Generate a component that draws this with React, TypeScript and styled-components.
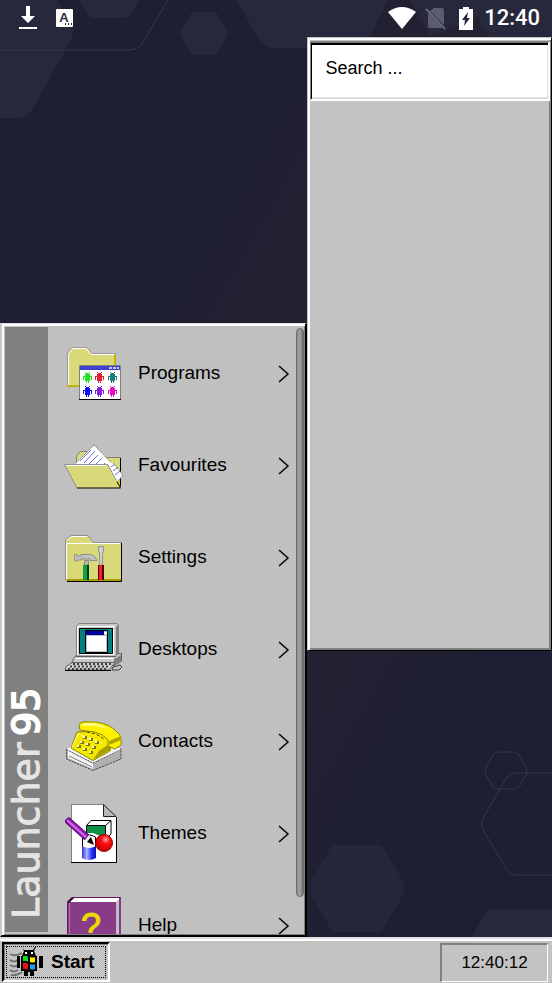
import React from "react";
import styled, { createGlobalStyle } from "styled-components";

const GlobalStyle = createGlobalStyle`
  * { box-sizing: border-box; }
  body { margin: 0; background: #1e1f33; }
  button, input { font: inherit; color: inherit; }
`;

const uiFont = `"Liberation Sans", Arial, sans-serif`;

const Screen = styled.div`
  position: relative;
  display: flex;
  flex-direction: column;
  height: 100vh;
  min-height: 480px;
  overflow: hidden;
  font-family: ${uiFont};
  font-size: 18px;
  color: #000;
`;

const WallpaperArt = styled.svg`
  position: absolute;
  inset: 0;
  width: 100%;
  height: 100%;
`;

const StatusBar = styled.header`
  position: relative;
  display: flex;
  align-items: center;
  justify-content: space-between;
  height: 37px;
  padding: 0 12px 1px 16px;
  color: #fff;
`;

const StatusGroup = styled.div<{ $gap: number }>`
  display: flex;
  align-items: center;
  gap: ${(p) => p.$gap}px;
`;

const StatusTime = styled.time`
  margin-left: 1px;
  font-family: Roboto, sans-serif;
  font-size: 22px;
  font-weight: 500;
  line-height: 36px;
`;

const Desktop = styled.main`
  position: relative;
  display: flex;
  flex: 1;
  min-height: 0;
`;

const StartMenu = styled.nav`
  display: flex;
  flex: 5 1 0;
  min-width: 0;
  margin-top: 286px;
  background: #c0c0c0;
  border: solid;
  border-width: 1px 2px 2px 2px;
  border-color: #dfdfdf #000 #000 #c8c8c8;
  box-shadow: inset 2px 2px 0 #fff, inset -1px -1px 0 #808080;
  padding: 3px 1px 2px 3px;
`;

const Banner = styled.div`
  flex: none;
  display: flex;
  align-items: center;
  width: 43px;
  margin-bottom: 1px;
  padding-top: 13px;
  background: #808080;
  color: #e4e4e4;
  font-family: "DejaVu Sans", Verdana, sans-serif;
  font-size: 38px;
  line-height: 45px;
  writing-mode: vertical-rl;
  transform: rotate(180deg);
  -webkit-text-stroke: 1px #e4e4e4;
`;

const BannerNumber = styled.b`
  margin-top: 6px;
  color: #fff;
  font-weight: normal;
  -webkit-text-stroke: 2px #fff;
`;

const MenuList = styled.ul`
  flex: 1;
  min-width: 0;
  margin: 0 0 -1px;
  padding: 0;
  list-style: none;
  overflow-y: auto;
  scrollbar-width: none;
`;

const MenuButton = styled.button`
  display: flex;
  align-items: center;
  width: 100%;
  height: 92px;
  padding: 0 6px 0 14px;
  border: 0;
  background: none;
  font-size: 19px;
  text-align: left;
`;

const MenuLabel = styled.span`
  flex: 1;
  padding-left: 12px;
`;

const ScrollTrack = styled.div`
  flex: none;
  width: 8px;
  padding-top: 1px;
`;

const ScrollThumb = styled.div`
  height: 94%;
  border: 1px solid #6c6c6c;
  border-radius: 4px;
  background: linear-gradient(90deg, #8a8a8a, #a4a4a4 50%, #6a6a6a);
`;

const SearchPanel = styled.section`
  flex: 4 1 0;
  min-width: 0;
  margin-bottom: 286px;
  padding: 3px 1px 2px 2px;
  background: #c3c3c3;
  border: 1px solid;
  border-color: #c3c3c3 #000 #000 #c3c3c3;
  box-shadow: inset 2px 2px 0 #fff, inset -2px -2px 0 #808080;
`;

const SearchInput = styled.input`
  display: block;
  width: 100%;
  height: 60px;
  padding: 0 14px 6px;
  border: solid;
  border-width: 2px 2px 2px 1px;
  border-color: #808080 #fff #fff #808080;
  border-radius: 0;
  background: #fff;
  box-shadow: inset 1px 2px 0 #000, inset -1px -2px 0 #dfdfdf;
  outline: 0;
  &::placeholder { color: #000; opacity: 1; }
`;

const Taskbar = styled.footer`
  position: relative;
  display: flex;
  align-items: stretch;
  justify-content: space-between;
  height: 46px;
  padding: 1px 4px 1px 2px;
  background: #c3c3c3;
  border-top: 2px solid #dfdfdf;
  box-shadow: inset 0 2px 0 #fff;
`;

const StartButton = styled.button`
  display: flex;
  margin-top: 2px;
  padding: 2px;
  border: solid;
  border-width: 2px;
  border-color: #000 #fff #fff #000;
  box-shadow: inset 1px 1px 0 #808080;
  background: repeating-conic-gradient(#bababa 0 25%, #cecece 0 50%) 0 0 / 2px 2px;
  font-size: 19px;
  font-weight: bold;
`;

const StartFocus = styled.span`
  display: flex;
  align-items: center;
  gap: 8px;
  padding: 0 11px 0 2px;
  border: 1px dotted #000;
`;

const Clock = styled.time`
  display: flex;
  align-items: center;
  justify-content: center;
  width: 108px;
  margin-top: 3px;
  border: solid;
  border-width: 2px 1px 1px 2px;
  border-color: #808080 #fff #fff #808080;
  font-size: 17px;
`;

const Wallpaper = () => (
  <WallpaperArt viewBox="0 0 552 983" preserveAspectRatio="xMidYMid slice" aria-hidden="true">
    <defs>
      <linearGradient id="sky" x1="0" y1="0" x2="1" y2="1">
        <stop offset="0" stopColor="#1e1f33" />
        <stop offset="0.25" stopColor="#1e1f33" />
        <stop offset="0.4" stopColor="#232132" />
        <stop offset="0.62" stopColor="#242132" />
        <stop offset="0.78" stopColor="#1e1f33" />
        <stop offset="1" stopColor="#1e1f33" />
      </linearGradient>
    </defs>
    <path fill="url(#sky)" d="M0 0H552V983H0Z" />
    <g fill="#27283c">
      <path d="M0 0H57L73 28Q74 33 72 38L32 110Q27 118 20 118H0Z" />
      <path d="M78 0L88 15Q90 18 94 18H124Q128 18 130 15L139 0Z" />
      <path d="M195 12H213Q216 12 218 15L227 30Q228 33 227 36L218 52Q216 55 213 55H195Q192 55 190 52L181 36Q180 33 181 30L190 15Q192 12 195 12Z" />
      <path d="M236 0L257 36Q264 48 276 48H355Q364 48 369 38L388 0Z" />
      <path d="M410 0H552V60H500L481 24Q479 20 481 16L430 37Z" />
      <path fill="#25263a" d="M336 845H378Q382 845 384 849L404 883Q406 888 404 893L384 928Q382 932 378 932H336Q332 932 330 928L310 893Q308 888 310 883L330 849Q332 845 336 845Z" />
      <path d="M471 938L483 917Q487 909 496 909H552V938Z" />
    </g>
    <g fill="none" stroke="#37374c">
      <path d="M0 50H130Q138 50 143 42L168 0" />
      <path d="M498 752H514Q517 752 519 755L526 767Q528 771 526 775L519 787Q517 789 514 789H498Q495 789 493 787L486 775Q484 771 486 767L493 755Q495 752 498 752Z" />
      <path d="M552 773H515Q510 773 507 777L483 818Q480 824 483 830L507 870Q510 875 515 875H552" />
    </g>
  </WallpaperArt>
);

const DownloadIcon = () => (
  <svg width="24" height="26" viewBox="0 0 24 26" fill="#fff" aria-hidden="true">
    <path d="M10 1h4v10h5l-7 7-7-7h5zM3 22h18v2H3z" />
  </svg>
);

const KeyboardIcon = () => (
  <svg width="18" height="20" viewBox="0 0 18 20" aria-hidden="true">
    <rect x="0" y="1" width="17" height="18" rx="1" fill="#fff" />
    <text x="8" y="14" textAnchor="middle" fontFamily="Liberation Sans, sans-serif" fontWeight="bold" fontSize="13" fill="#27283c">A</text>
    <path fill="#27283c" d="M9 15h1v2H9zM12 15h1v2h-1zM15 15h1v2h-1z" />
  </svg>
);

const WifiIcon = () => (
  <svg width="28" height="24" viewBox="0 0 28 24" fill="#fff" aria-hidden="true">
    <path d="M14 23L0 6Q14-4 28 6Z" />
  </svg>
);

const NoSimIcon = () => (
  <svg width="22" height="24" viewBox="0 0 22 24" aria-hidden="true">
    <path fill="#5c5c6e" d="M9 2h8q2 0 2 2v15L5 5zM3 7l15 15H5q-2 0-2-2z" />
    <path stroke="#68687a" strokeWidth="2" d="M1 3l19 20" />
  </svg>
);

const BatteryIcon = () => (
  <svg width="18" height="24" viewBox="-2 0 18 24" aria-hidden="true">
    <path fill="#fff" d="M5 1h6v2h4v21H1V3h4z" />
    <path fill="#27283c" d="M10 6L4 14h3l-1 6 6-8H9z" />
  </svg>
);

const Android = ({ x, y, color }: { x: number; y: number; color: string }) => (
  <path
    transform={`translate(${x} ${y})`}
    fill={color}
    d="M2 0h1v1h3V0h1v1H6v1h1v2h2v4H8V5H7v4H6v2H5V9H4v2H3V9H2V5H1v3H0V4h2V2h1V1H2z"
  />
);

const ProgramsArt = () => (
  <>
    <path fill="#d9d97a" stroke="#9a9a9a" d="M5.500 45V12L10 6.500H25L30 12.500H53.500V46" />
    <path fill="none" stroke="#fff" d="M6.500 45V13L11 7.500H24L29 13.500H52" />
    <path fill="none" stroke="#c0b400" strokeWidth="2" d="M53 14V45H5" />
    <path fill="#fff" stroke="#808080" d="M17.500 24.500H58.500V58.500H17.500Z" />
    <path fill="#4040d0" d="M18 25h40v4H18z" />
    <path fill="#c8c8e0" d="M47 26h3v2h-3zM51 26h3v2h-3zM55 26h2v2h-2z" />
    <path stroke="#000" d="M17 58.500h42" />
    <Android x={21} y={31} color="#20e020" />
    <Android x={33} y={31} color="#e02030" />
    <Android x={46} y={31} color="#207878" />
    <Android x={21} y={45} color="#1010f0" />
    <Android x={33} y={45} color="#8020e0" />
    <Android x={46} y={45} color="#e010c0" />
  </>
);

const FavouritesArt = () => (
  <>
    <path fill="#d9d97a" stroke="#808080" d="M14.500 54V23L18 18.500H25L29 24.500H58.500V54Z" />
    <path fill="#e8d800" d="M53 44l5-4v14h-3z" />
    <path fill="none" stroke="#000" d="M58.500 25V55" />
    <path fill="#fff" stroke="#808080" strokeDasharray="2 1" d="M32 12L13 31L50 56L56 48L61 42Z" />
    <path stroke="#7070d8" d="M29 17L18 28M33 18L22 30M36 22L27 31M40 25L34 31M43 30L39 34" />
    <path fill="#d9d97a" stroke="#909090" d="M2.500 31.500H46L59 55H15Z" />
    <path fill="#fff" d="M45 29l6 1 10 12-6 7z" />
    <path stroke="#7070d8" d="M49 34l4-3M51 38l5-4M53 42l5-4" />
    <path fill="none" stroke="#808080" strokeDasharray="2 1" d="M46 32l9 17 6-7-10-12" />
    <path fill="none" stroke="#fff" d="M4 32.500H45" />
    <path fill="none" stroke="#202000" d="M55 49L58.500 55H15" />
  </>
);

const SettingsArt = () => (
  <>
    <path fill="#d9d97a" stroke="#909090" d="M3.500 55V15L9 10.500H26L31 17.500H59.500V55Z" />
    <path fill="none" stroke="#fff" d="M4.500 54V18.500H58M5 15L10 11.500H25" />
    <path stroke="#a89c00" strokeWidth="2" d="M5 55H59" />
    <path fill="none" stroke="#000" d="M59.500 18V56.500H5" />
    <path fill="#c0c0c0" stroke="#909090" d="M12.500 29.500H15V31H19V29.500H29Q33 30 35 35.500H28V34H19V35H15V36H12.500Z" />
    <path fill="#b8b8b8" stroke="#888" d="M22.500 35.500h4V40h-4z" />
    <path fill="#10a040" d="M21 40h4v15h-4z" />
    <path fill="#003818" d="M25 40h2v15h-2z" />
    <path fill="#d0d0d0" stroke="#909090" d="M36.500 21.500h5v5l-1 2V40h-3V28l-1-2z" />
    <path fill="#f02030" d="M37 40h3v15h-3z" />
    <path fill="#500" d="M36 40h1v15h-1zM40 40h2v15h-2z" />
  </>
);

const DesktopsArt = () => (
  <>
    <path fill="#c8c8c8" stroke="#606060" d="M12.500 40.500L15 37H52L59.500 36.500V44L52 48.500H8Z" />
    <path fill="#c8c8c8" stroke="#808080" d="M14.500 39V9L17 6.500H55L56.500 8V36L53 39.500Z" />
    <path fill="#808080" d="M54 10l2-2v28l-2 3z" />
    <path fill="none" stroke="#fff" d="M15.500 38V9.500H53" />
    <path stroke="#606060" d="M14 39.500H54" />
    <path fill="#008080" stroke="#000" d="M17.500 11.500H50.500V36.500H17.500Z" />
    <path fill="none" stroke="#fff" d="M18 37.500H51.500V12" />
    <path fill="#c0c0c0" stroke="#000" d="M23.500 13.500H45.500V35.500H23.500Z" />
    <path fill="#0000a0" d="M24 14h18v4H24z" />
    <path fill="#fff" d="M42 15h3v2h-3zM25 19h19v15H25z" />
    <path fill="#808080" d="M52 42l7-4v6l-7 4z" />
    <path stroke="#fff" d="M13 41.500H51" />
    <path fill="#d0d0d0" stroke="#606060" d="M10 45.500H53L47 53H3.500V50Z" />
    <path stroke="#404040" strokeWidth="2" strokeDasharray="2 2" d="M11 47H51M8 49.500H48M6 52H45" />
    <path fill="#c0c0c0" stroke="#404040" d="M51 50l7-2 2 2-3 3h-7z" />
    <path stroke="#000" d="M3 53.500H49" />
  </>
);

const ContactsArt = () => (
  <>
    <path fill="#b0b0b0" stroke="#404040" strokeDasharray="2 1" d="M4.500 40L31 54L59 40V50L31 61.500L4.500 50Z" />
    <path fill="#f0f0f0" stroke="#fff" d="M5.500 40L32 28L58 40L31 53Z" />
    <path fill="#f4f4f4" d="M6 42l25 13v5L6 49z" />
    <path stroke="#808080" d="M7 47L30 58" />
    <path fill="#f4e800" stroke="#908800" d="M9 39L15 23L43 22L50 33L48 42L31 51.500Z" />
    <path fill="#a8a000" d="M31 51L48 41L50 33L37 42Z" />
    <path fill="none" stroke="#fffa90" d="M10 38L16 25L40 34" />
    <path fill="#807800" d="M21 27h4v3h-4zM27 29h4v3h-4zM33 32h4v3h-4zM18 32h4v3h-4zM24 34h4v3h-4zM30 37h4v3h-4zM15 36h4v3h-4zM21 39h4v3h-4zM27 42h4v3h-4z" />
    <path fill="#fffbb0" d="M21 27h2v2h-2zM27 29h2v2h-2zM33 32h2v2h-2zM18 32h2v2h-2zM24 34h2v2h-2zM30 37h2v2h-2zM15 36h2v2h-2zM21 39h2v2h-2zM27 42h2v2h-2z" />
    <path fill="#fff000" stroke="#908800" d="M17 16Q18 12 27 13L34 13Q48 15 55 23Q60 26 59 36L53 40L46 37V31Q41 25 33 23L24 22L18 21Z" />
    <path fill="#fffb90" d="M20 15q8-2 15 0 8 2 12 6-12-6-27-4z" />
    <path fill="#b0a400" d="M47 32l12-5v4l-12 5z" />
    <path fill="none" stroke="#403c00" strokeDasharray="3 2" d="M25 23l9 2 8 5" />
  </>
);

const ThemesArt = () => (
  <>
    <defs>
      <radialGradient id="ball" cx="0.6" cy="0.3" r="0.7">
        <stop offset="0" stopColor="#ffb0b0" />
        <stop offset="0.35" stopColor="#ff1010" />
        <stop offset="1" stopColor="#c00000" />
      </radialGradient>
      <linearGradient id="ink">
        <stop offset="0" stopColor="#3030e0" />
        <stop offset="0.35" stopColor="#b0b8ff" />
        <stop offset="0.7" stopColor="#2030ff" />
        <stop offset="1" stopColor="#1010b0" />
      </linearGradient>
    </defs>
    <path fill="#fff" stroke="#808080" d="M9.500 3.500H41L54.500 16V61.500H9.500Z" />
    <path fill="none" stroke="#000" d="M54.500 16V61.500H9" />
    <path fill="#b8b8b8" stroke="#202020" d="M41.500 3.500L54 15.500H41.500Z" />
    <path fill="#fff" stroke="#000" d="M24.500 24.500L29 19.500H49V33L44 38H24.500Z" />
    <path fill="#109048" d="M25 25h18v12L31 32l-6 0z" />
    <path fill="none" stroke="#000" d="M25 24.500H43.500V37M43.500 24.500L49 19.500" />
    <path fill="#fff" stroke="#000" d="M20.500 46V36Q27 32 33.500 36V46" />
    <path fill="url(#ink)" d="M20 45q7 4 14 0v12q-7 4-14 0z" />
    <circle cx="42" cy="42" r="8.500" fill="url(#ball)" stroke="#900" />
    <path fill="#9018b0" stroke="#500070" d="M3.500 19L7 16.500L27 34L23 39L3.500 21.500Z" />
    <path stroke="#d070e8" strokeWidth="2" d="M5 19L24 36" />
    <path fill="#e8e8e8" d="M27 34l-4 5 3 2 4-4z" />
    <path fill="#000" d="M29 36l-4 5 7 3z" />
  </>
);

const HelpArt = () => (
  <>
    <path fill="#883c88" stroke="#601860" d="M5.500 64V9L10 4.500H58.500V64Z" />
    <path fill="#fff" d="M8 9l4-4h46v59h-4V9z" />
    <path fill="#c0c0c0" d="M54 9l3-3v58h-3z" />
    <path fill="#883c88" d="M8 9.500h46V64H8z" />
    <path stroke="#b868b8" d="M7.500 10V64" />
    <path stroke="#883c88" strokeWidth="2" d="M58 5V64" />
    <path fill="#401040" d="M5 9l5-5 2 1-5 5z" />
    <text x="29" y="46" textAnchor="middle" fontFamily="Liberation Sans, sans-serif" fontSize="36" fill="#e8dc00" stroke="#e8dc00">?</text>
  </>
);

const Chevron = () => (
  <svg width="14" height="20" viewBox="0 0 14 20" fill="none" stroke="#000" strokeWidth="1.500" aria-hidden="true">
    <path d="M3 3l9 8-9 8" />
  </svg>
);

const StartLogo = () => (
  <svg width="34" height="30" viewBox="0 0 34 30" aria-hidden="true">
    <path fill="none" stroke="#707070" strokeWidth="2" d="M1 7q5 3 12-1M1 13q4 3 8 0M1 18q4 3 8 0M1 23q4 3 8 0M2 28q6 1 11-3" />
    <path fill="#000" d="M13 0l2 3h9l2-3h1l-2 4 2 5h1v15h-3v5h-4v-4h-2v4h-4v-5h-3V9h1l2-5-2-4zM8 9h3v12H8zM30 9h4v12h-4z" />
    <path fill="#fff" d="M16 5h2v2h-2zM22 5h2v2h-2z" />
    <path fill="#10e020" d="M14 9q3-1 5 1v5q-2-2-5-1z" />
    <path fill="#fff000" d="M21 10q3 1 5 0v5q-2 1-5 0z" />
    <path fill="#f01010" d="M14 16q3-1 5 1v6q-2-2-5-1z" />
    <path fill="#20a0f0" d="M21 17q3 1 5 0v5q-2 1-5 0z" />
  </svg>
);

const menuItems = [
  { label: "Programs", Art: ProgramsArt },
  { label: "Favourites", Art: FavouritesArt },
  { label: "Settings", Art: SettingsArt },
  { label: "Desktops", Art: DesktopsArt },
  { label: "Contacts", Art: ContactsArt },
  { label: "Themes", Art: ThemesArt },
  { label: "Help", Art: HelpArt },
];

export default function App() {
  return (
    <Screen>
      <GlobalStyle />
      <Wallpaper />
      <StatusBar>
        <StatusGroup $gap={16}>
          <DownloadIcon />
          <KeyboardIcon />
        </StatusGroup>
        <StatusGroup $gap={9}>
          <WifiIcon />
          <NoSimIcon />
          <BatteryIcon />
          <StatusTime>12:40</StatusTime>
        </StatusGroup>
      </StatusBar>
      <Desktop>
        <StartMenu aria-label="Start menu">
          <Banner>
            <span>Launcher</span>
            <BannerNumber>95</BannerNumber>
          </Banner>
          <MenuList>
            {menuItems.map(({ label, Art }) => (
              <li key={label}>
                <MenuButton type="button">
                  <svg width="64" height="64" viewBox="0 0 64 64" aria-hidden="true">
                    <Art />
                  </svg>
                  <MenuLabel>{label}</MenuLabel>
                  <Chevron />
                </MenuButton>
              </li>
            ))}
          </MenuList>
          <ScrollTrack>
            <ScrollThumb />
          </ScrollTrack>
        </StartMenu>
        <SearchPanel>
          <SearchInput type="text" aria-label="Search" placeholder="Search ..." />
        </SearchPanel>
      </Desktop>
      <Taskbar>
        <StartButton type="button">
          <StartFocus>
            <StartLogo />
            Start
          </StartFocus>
        </StartButton>
        <Clock>12:40:12</Clock>
      </Taskbar>
    </Screen>
  );
}
